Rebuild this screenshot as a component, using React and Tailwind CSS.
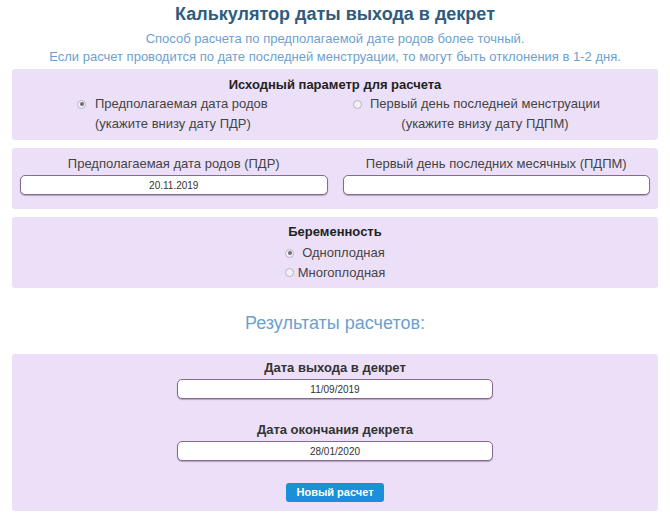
import { useState } from "react";

function Radio({ checked }) {
  return (
    <span className="inline-flex items-center justify-center w-[9px] h-[9px] rounded-full border border-[#b9b3bf] bg-[#f2f0f4] shrink-0">
      {checked && <span className="w-[4px] h-[4px] rounded-full bg-[#6f6a74]" />}
    </span>
  );
}

function Field({ value, className = "" }) {
  return (
    <div
      className={`h-[20px] bg-white border-[1.5px] border-[#866a90] rounded-[5px] shadow-[0_1px_1px_rgba(80,40,90,0.35)] flex items-center justify-center text-[10px] text-[#333] ${className}`}
    >
      {value}
    </div>
  );
}

function App() {
  const [param, setParam] = useState("pdr");
  const [pregnancy, setPregnancy] = useState("single");

  return (
    <div
      className="w-[670px] h-[518px] bg-white px-[12px] text-[#333]"
      style={{ fontFamily: '"Liberation Sans", Arial, sans-serif' }}
    >
      {/* Header */}
      <h1 className="pt-[3px] text-center text-[18px] leading-[23px] font-bold text-[#2d5c80]">
        Калькулятор даты выхода в декрет
      </h1>
      <div className="mt-[4px] text-center text-[13px] leading-[18px] text-[#6d9fcf]">
        <p>Способ расчета по предполагаемой дате родов более точный.</p>
        <p>Если расчет проводится по дате последней менструации, то могут быть отклонения в 1-2 дня.</p>
      </div>

      {/* Source param */}
      <div className="mt-[3px] h-[71px] bg-[#ece0f8] rounded-[3px] pt-[8px]">
        <div className="text-center text-[13px] leading-[16px] font-bold text-[#222]">
          Исходный параметр для расчета
        </div>
        <div className="grid grid-cols-2 mt-[1px] text-[13px] leading-[20px] text-[#444]">
          <label className="flex pl-[65px] cursor-pointer" onClick={() => setParam("pdr")}>
            <span className="h-[20px] flex items-center mr-[9px]">
              <Radio checked={param === "pdr"} />
            </span>
            <span>
              Предполагаемая дата родов
              <br />
              (укажите внизу дату ПДР)
            </span>
          </label>
          <label className="flex pl-[18px] cursor-pointer" onClick={() => setParam("pdpm")}>
            <span className="h-[20px] flex items-center mr-[8px]">
              <Radio checked={param === "pdpm"} />
            </span>
            <span className="text-center">
              Первый день последней менструации
              <br />
              (укажите внизу дату ПДПМ)
            </span>
          </label>
        </div>
      </div>

      {/* Dates */}
      <div className="mt-[8px] h-[61px] bg-[#ece0f8] rounded-[3px] px-[8px] pt-[7px] grid grid-cols-2 gap-x-[15px]">
        <div>
          <div className="text-center text-[13px] leading-[18px] text-[#444]">
            Предполагаемая дата родов (ПДР)
          </div>
          <Field value="20.11.2019" className="mt-[2px]" />
        </div>
        <div>
          <div className="text-center text-[13px] leading-[18px] text-[#444]">
            Первый день последних месячных (ПДПМ)
          </div>
          <Field value="" className="mt-[2px]" />
        </div>
      </div>

      {/* Pregnancy */}
      <div className="mt-[8px] h-[71px] bg-[#ece0f8] rounded-[3px] pt-[7px] flex flex-col items-center text-[13px]">
        <div className="leading-[16px] font-bold text-[#222]">Беременность</div>
        <label className="mt-[3px] flex items-center h-[20px] cursor-pointer text-[#444]" onClick={() => setPregnancy("single")}>
          <Radio checked={pregnancy === "single"} />
          <span className="ml-[8px]">Одноплодная</span>
        </label>
        <label className="flex items-center h-[19px] cursor-pointer text-[#444]" onClick={() => setPregnancy("multi")}>
          <Radio checked={pregnancy === "multi"} />
          <span className="ml-[4px]">Многоплодная</span>
        </label>
      </div>

      {/* Results */}
      <h2 className="mt-[24px] text-center text-[18px] leading-[22px] text-[#6d9fcf]">
        Результаты расчетов:
      </h2>

      <div className="mt-[20px] h-[157px] bg-[#ece0f8] rounded-[3px] pt-[6px] flex flex-col items-center">
        <div className="text-[13px] leading-[16px] font-bold text-[#333]">Дата выхода в декрет</div>
        <Field value="11/09/2019" className="mt-[3px] w-[316px]" />
        <div className="mt-[23px] text-[13px] leading-[16px] font-bold text-[#333]">Дата окончания декрета</div>
        <Field value="28/01/2020" className="mt-[3px] w-[316px]" />
        <button className="mt-[22px] w-[98px] h-[19px] rounded-[3px] bg-[#1a90d8] text-white text-[11px] font-bold leading-none">
          Новый расчет
        </button>
      </div>
    </div>
  );
}

export default App;
